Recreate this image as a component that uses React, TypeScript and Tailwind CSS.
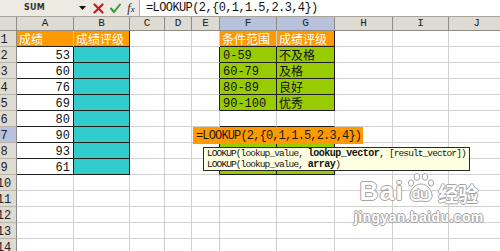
import React from "react";

const GRID =
  "grid grid-cols-[17px_57px_56px_35px_27px_28px_57px_58px_58px_56px_56px]";
const MONO = "font-['Liberation_Mono','DejaVu_Sans_Mono',monospace]";
const CJK = "font-['Noto_Sans_CJK_SC','Noto_Sans',sans-serif]";

type CellProps = {
  r?: boolean;
  b?: boolean;
  bg?: string;
  className?: string;
  children?: React.ReactNode;
};

function Cell({ r, b, bg, className, children }: CellProps) {
  return (
    <div
      className={`flex items-center overflow-hidden whitespace-nowrap border-r border-b leading-none text-[12px] ${
        r ? "border-r-[#1e1e1e]" : "border-r-[#d0d0d0]"
      } ${b ? "border-b-[#1e1e1e]" : "border-b-[#d0d0d0]"} ${
        bg ?? "bg-white"
      } ${className ?? ""}`}
    >
      {children}
    </div>
  );
}

function RowHead({ n, sel }: { n: number; sel?: boolean }) {
  return (
    <div
      className={`flex items-center overflow-hidden border-r border-b border-r-[#8e8c84] border-b-[#b8b5ab] ${
        sel ? "bg-[#b9c2dc]" : "bg-[#dedbd2]"
      }`}
    >
      <span
        className={`-ml-[9px] w-[26px] shrink-0 pt-[2px] text-center text-[12px] leading-none text-[#222] ${MONO}`}
      >
        {n}
      </span>
    </div>
  );
}

function ColHead({ l, sel }: { l: string; sel?: boolean }) {
  return (
    <div
      className={`flex items-center justify-center border-r border-b border-r-[#8e8c84] border-b-[#8e8c84] text-[11px] leading-none text-[#222] ${MONO} ${
        sel ? "bg-[#b9c2dc]" : "bg-[#dedbd2]"
      }`}
    >
      {l}
    </div>
  );
}

const ORANGE = "bg-[#ff9900]";
const TEAL = "bg-[#33cccc]";
const GREEN = "bg-[#99cc00]";

const scores = [53, 60, 76, 69, 80, 90, 93, 61];
const ranges = [
  ["0-59", "不及格"],
  ["60-79", "及格"],
  ["80-89", "良好"],
  ["90-100", "优秀"],
];

function DataRow({ n }: { n: number }) {
  const inAB = n >= 2 && n <= 9;
  const score = inAB ? scores[n - 2] : undefined;
  const inTable = n >= 2 && n <= 5;
  const lower = n >= 8 && n <= 9;
  const greenRow = inTable || lower;
  const range = inTable ? ranges[n - 2] : undefined;
  const fgBottomDark = greenRow || n === 6 || n === 7;
  return (
    <div className={`${GRID} h-[16px]`}>
      <RowHead n={n} sel={n === 7} />
      <Cell r={inAB} b={inAB} className={`justify-end pr-[3px] pt-[2px] text-[#111] ${MONO}`}>
        {score}
      </Cell>
      <Cell r={inAB} b={inAB} bg={inAB ? TEAL : undefined} />
      <Cell />
      <Cell />
      <Cell r={greenRow} />
      <Cell
        r={greenRow}
        b={fgBottomDark}
        bg={greenRow ? GREEN : undefined}
        className={`pl-[3px] pt-[2px] text-[#111] ${MONO}`}
      >
        {range ? range[0] : null}
      </Cell>
      <Cell
        r={greenRow}
        b={fgBottomDark}
        bg={greenRow ? GREEN : undefined}
        className={`pl-[2px] text-[#111] ${CJK}`}
      >
        {range ? range[1] : null}
      </Cell>
      <Cell />
      <Cell />
      <Cell />
    </div>
  );
}

function Watermark() {
  const shadow =
    "[text-shadow:1px_0_0_#a4a4a4,-1px_0_0_#a4a4a4,0_1px_0_#a4a4a4,0_-1px_0_#a4a4a4]";
  return (
    <div className="pointer-events-none absolute left-[354px] top-[172px] flex flex-col items-center">
      <div className="flex items-end">
        <span
          className={`font-['Liberation_Sans',sans-serif] text-[26px] font-bold leading-none tracking-[1.5px] text-white ${shadow}`}
        >
          Bai
        </span>
        <div className="relative mx-[1px] h-[32px] w-[32px]">
          <svg width="32" height="32" viewBox="0 0 32 32" className="absolute inset-0">
            <g fill="#ffffff" stroke="#a4a4a4" strokeWidth="1">
              <ellipse cx="6" cy="11" rx="2.6" ry="3.2" />
              <ellipse cx="12" cy="5" rx="2.8" ry="3.4" />
              <ellipse cx="20" cy="5" rx="2.8" ry="3.4" />
              <ellipse cx="26" cy="11" rx="2.6" ry="3.2" />
              <path d="M16 12 C9 12 4 20 5 25 C6 30 11 30 16 29 C21 30 26 30 27 25 C28 20 23 12 16 12 Z" />
            </g>
          </svg>
          <span
            className={`absolute left-[7px] top-[15px] font-['Liberation_Sans',sans-serif] text-[13px] font-bold leading-none text-white ${shadow}`}
          >
            du
          </span>
        </div>
        <span className={`${CJK} text-[20px] font-bold leading-none text-white ${shadow}`}>
          经验
        </span>
      </div>
      <span
        className={`mt-[6px] font-['Liberation_Sans',sans-serif] text-[14px] font-bold leading-none tracking-[0.4px] text-white ${shadow}`}
      >
        jingyan.baidu.com
      </span>
    </div>
  );
}

export default function App() {
  const rows = Array.from({ length: 14 }, (_, i) => i + 1);
  return (
    <div className="relative h-[251px] w-[500px] overflow-hidden bg-white">
      {/* Formula bar */}
      <div className="flex h-[17px] border-b border-[#a8a69c] bg-[#eceae2]">
        <div className="flex w-[75px] items-center pl-[24px]">
          <span className="font-['DejaVu_Sans',sans-serif] text-[8px] font-bold leading-none tracking-[0.3px] text-[#333]">
            SUM
          </span>
        </div>
        <div className="flex w-[14px] items-center justify-center">
          <svg width="7" height="4" viewBox="0 0 7 4">
            <path d="M0 0 L7 0 L3.5 4 Z" fill="#111" />
          </svg>
        </div>
        <div className="flex w-[16px] items-center justify-center pl-[2px]">
          <svg width="11" height="11" viewBox="0 0 11 11">
            <path d="M1.5 1.5 L9.5 9.5 M9.5 1.5 L1.5 9.5" stroke="#c8191f" strokeWidth="2.2" strokeLinecap="round" />
          </svg>
        </div>
        <div className="flex w-[17px] items-center justify-center pl-[4px]">
          <svg width="11" height="11" viewBox="0 0 11 11">
            <path d="M1 5.5 L4 9 L10 1.5" stroke="#2e9a3a" strokeWidth="2" fill="none" strokeLinecap="round" strokeLinejoin="round" />
          </svg>
        </div>
        <div className="flex w-[15px] items-center justify-center pl-[3px]">
          <span className="font-['Liberation_Serif',serif] text-[12px] italic leading-none text-[#222]">
            f<span className="text-[9px]">x</span>
          </span>
        </div>
        <div className="ml-[2px] flex flex-1 items-center border-l border-[#b0aea4] bg-white pl-[6px]">
          <span className={`${MONO} text-[12px] leading-none tracking-[-0.6px] text-[#111]`}>
            =LOOKUP(2,{"{"}0,1,1.5,2.3,4{"}"})
          </span>
        </div>
      </div>

      {/* Column headers */}
      <div className={`${GRID} h-[14px]`}>
        <div className="border-r border-b border-r-[#8e8c84] border-b-[#8e8c84] bg-[#dedbd2]" />
        <ColHead l="A" />
        <ColHead l="B" />
        <ColHead l="C" />
        <ColHead l="D" />
        <ColHead l="E" />
        <ColHead l="F" sel />
        <ColHead l="G" sel />
        <ColHead l="H" />
        <ColHead l="I" />
        <ColHead l="J" />
      </div>

      {/* Row 1 */}
      <div className={`${GRID} h-[16px]`}>
        <RowHead n={1} />
        <Cell b bg={ORANGE} className={`pl-[2px] text-white ${CJK}`}>
          成绩
        </Cell>
        <Cell r b bg={ORANGE} className={`pl-[2px] text-white ${CJK}`}>
          成绩评级
        </Cell>
        <Cell />
        <Cell />
        <Cell />
        <Cell b bg={ORANGE} className={`pl-[2px] text-white ${CJK}`}>
          条件范围
        </Cell>
        <Cell r b bg={ORANGE} className={`pl-[2px] text-white ${CJK}`}>
          成绩评级
        </Cell>
        <Cell />
        <Cell />
        <Cell />
      </div>

      {rows.slice(1).map((n) => (
        <DataRow key={n} n={n} />
      ))}

      {/* In-cell formula editor */}
      <div className="absolute left-[193px] top-[127px] flex h-[17px] w-[170px] items-center bg-[#ff9900] pl-[3px]">
        <span className={`${MONO} text-[12px] leading-none tracking-[-0.85px] text-[#1a1a1a]`}>
          =LOOKUP(2,{"{"}0,1,1.5,2.3,4{"}"})
        </span>
      </div>

      {/* Function tooltip */}
      <div className="absolute left-[203px] top-[147px] flex h-[24px] w-[267px] flex-col justify-center border border-[#2a2a2a] bg-[#ffffe1] pl-[3px] text-[#111]">
        <div className="flex h-[11px] items-center whitespace-pre leading-none">
          <span className={`${MONO} whitespace-pre text-[9.5px] tracking-[-0.9px]`}>LOOKUP(lookup_value, </span>
          <span className={`${MONO} whitespace-pre text-[10px] font-bold tracking-[-0.5px]`}>lookup_vector</span>
          <span className={`${MONO} whitespace-pre text-[9.5px] tracking-[-0.9px]`}>, [result_vector])</span>
        </div>
        <div className="flex h-[11px] items-center whitespace-pre leading-none">
          <span className={`${MONO} whitespace-pre text-[9.5px] tracking-[-0.9px]`}>LOOKUP(lookup_value, </span>
          <span className={`${MONO} whitespace-pre text-[10px] font-bold tracking-[-0.5px]`}>array</span>
          <span className={`${MONO} whitespace-pre text-[9.5px] tracking-[-0.9px]`}>)</span>
        </div>
      </div>

      <Watermark />
    </div>
  );
}
